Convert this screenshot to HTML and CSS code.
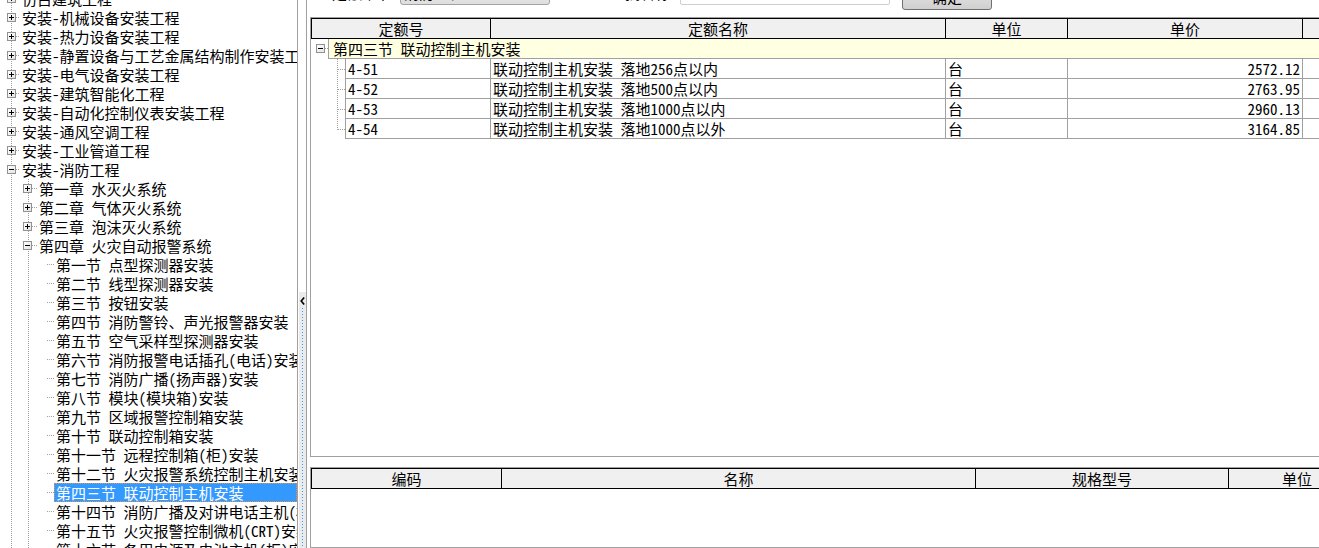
FILE: index.html
```html
<!DOCTYPE html>
<html lang="zh-CN">
<head>
<meta charset="utf-8">
<title>定额查询</title>
<link rel="stylesheet" href="styles.css">
</head>
<body>
<div class="tree-panel">
  <div class="tree">
    <div class="node l0"><span class="box plus"></span><span class="hc"></span><span class="lbl">仿古建筑工程</span></div>
    <div class="node l0"><span class="box plus"></span><span class="hc"></span><span class="lbl">安装-机械设备安装工程</span></div>
    <div class="node l0"><span class="box plus"></span><span class="hc"></span><span class="lbl">安装-热力设备安装工程</span></div>
    <div class="node l0"><span class="box plus"></span><span class="hc"></span><span class="lbl">安装-静置设备与工艺金属结构制作安装工程</span></div>
    <div class="node l0"><span class="box plus"></span><span class="hc"></span><span class="lbl">安装-电气设备安装工程</span></div>
    <div class="node l0"><span class="box plus"></span><span class="hc"></span><span class="lbl">安装-建筑智能化工程</span></div>
    <div class="node l0"><span class="box plus"></span><span class="hc"></span><span class="lbl">安装-自动化控制仪表安装工程</span></div>
    <div class="node l0"><span class="box plus"></span><span class="hc"></span><span class="lbl">安装-通风空调工程</span></div>
    <div class="node l0"><span class="box plus"></span><span class="hc"></span><span class="lbl">安装-工业管道工程</span></div>
    <div class="node l0"><span class="box minus"></span><span class="hc"></span><span class="lbl">安装-消防工程</span></div>
    <div class="kids">
      <div class="node l1"><span class="box plus"></span><span class="hc"></span><span class="lbl">第一章&ensp;水灭火系统</span></div>
      <div class="node l1"><span class="box plus"></span><span class="hc"></span><span class="lbl">第二章&ensp;气体灭火系统</span></div>
      <div class="node l1"><span class="box plus"></span><span class="hc"></span><span class="lbl">第三章&ensp;泡沫灭火系统</span></div>
      <div class="node l1"><span class="box minus"></span><span class="hc"></span><span class="lbl">第四章&ensp;火灾自动报警系统</span></div>
      <div class="node l2"><span class="hc"></span><span class="lbl">第一节&ensp;点型探测器安装</span></div>
      <div class="node l2"><span class="hc"></span><span class="lbl">第二节&ensp;线型探测器安装</span></div>
      <div class="node l2"><span class="hc"></span><span class="lbl">第三节&ensp;按钮安装</span></div>
      <div class="node l2"><span class="hc"></span><span class="lbl">第四节&ensp;消防警铃、声光报警器安装</span></div>
      <div class="node l2"><span class="hc"></span><span class="lbl">第五节&ensp;空气采样型探测器安装</span></div>
      <div class="node l2"><span class="hc"></span><span class="lbl">第六节&ensp;消防报警电话插孔(电话)安装</span></div>
      <div class="node l2"><span class="hc"></span><span class="lbl">第七节&ensp;消防广播(扬声器)安装</span></div>
      <div class="node l2"><span class="hc"></span><span class="lbl">第八节&ensp;模块(模块箱)安装</span></div>
      <div class="node l2"><span class="hc"></span><span class="lbl">第九节&ensp;区域报警控制箱安装</span></div>
      <div class="node l2"><span class="hc"></span><span class="lbl">第十节&ensp;联动控制箱安装</span></div>
      <div class="node l2"><span class="hc"></span><span class="lbl">第十一节&ensp;远程控制箱(柜)安装</span></div>
      <div class="node l2"><span class="hc"></span><span class="lbl">第十二节&ensp;火灾报警系统控制主机安装</span></div>
      <div class="node l2 sel"><span class="hc"></span><span class="lbl">第四三节&ensp;联动控制主机安装</span></div>
      <div class="node l2"><span class="hc"></span><span class="lbl">第十四节&ensp;消防广播及对讲电话主机(柜)安装</span></div>
      <div class="node l2"><span class="hc"></span><span class="lbl">第十五节&ensp;火灾报警控制微机(CRT)安装</span></div>
      <div class="node l2"><span class="hc"></span><span class="lbl">第十六节&ensp;备用电源及电池主机(柜)安装</span></div>
    </div>
  </div>
</div>

<div class="splitter">
  <div class="handle">
    <svg class="arrow" width="5" height="8" viewBox="0 0 5 8"><path d="M4.2 0.5 L1.2 4 L4.2 7.5" fill="none" stroke="#000" stroke-width="1.6"/></svg>
    <div class="dots"></div>
  </div>
</div>

<div class="main">
  <div class="toolbar">
    <div class="tb">
      <span class="tb-label">定额章节</span>
      <span class="combo">消防工程</span>
      <span class="tb-label second">查找名称</span>
      <span class="input"></span>
      <span class="btn">确定</span>
    </div>
  </div>

  <div class="grid upper">
    <div class="head">
      <div class="h w1">定额号</div>
      <div class="h w2">定额名称</div>
      <div class="h w3">单位</div>
      <div class="h w4">单价</div>
      <div class="h w5"></div>
    </div>
    <div class="row grp">
      <div class="ggut"><span class="box minus"></span><span class="ghl"></span></div>
      <div class="gcell">第四三节&ensp;联动控制主机安装</div>
    </div>
    <div class="row">
      <div class="gut"><span class="vl"></span><span class="hl"></span></div>
      <div class="cell c1">4-51</div>
      <div class="cell w2">联动控制主机安装&ensp;落地256点以内</div>
      <div class="cell w3">台</div>
      <div class="cell w4 num">2572.12</div>
      <div class="cell w5"></div>
    </div>
    <div class="row">
      <div class="gut"><span class="vl"></span><span class="hl"></span></div>
      <div class="cell c1">4-52</div>
      <div class="cell w2">联动控制主机安装&ensp;落地500点以内</div>
      <div class="cell w3">台</div>
      <div class="cell w4 num">2763.95</div>
      <div class="cell w5"></div>
    </div>
    <div class="row">
      <div class="gut"><span class="vl"></span><span class="hl"></span></div>
      <div class="cell c1">4-53</div>
      <div class="cell w2">联动控制主机安装&ensp;落地1000点以内</div>
      <div class="cell w3">台</div>
      <div class="cell w4 num">2960.13</div>
      <div class="cell w5"></div>
    </div>
    <div class="row last">
      <div class="gut"><span class="vl"></span><span class="hl"></span></div>
      <div class="cell c1">4-54</div>
      <div class="cell w2">联动控制主机安装&ensp;落地1000点以外</div>
      <div class="cell w3">台</div>
      <div class="cell w4 num">3164.85</div>
      <div class="cell w5"></div>
    </div>
  </div>

  <div class="grid lower">
    <div class="head">
      <div class="h b1">编码</div>
      <div class="h b2">名称</div>
      <div class="h b3">规格型号</div>
      <div class="h b4">单位</div>
    </div>
  </div>
</div>
</body>
</html>
```

FILE: styles.css
```css
* { box-sizing: border-box; }
html, body { margin: 0; padding: 0; }
body {
  display: flex;
  width: 1319px;
  height: 548px;
  overflow: hidden;
  background: #fff;
  color: #000;
  font-family: "Noto Sans Mono CJK SC", "Noto Sans CJK SC", "Noto Sans", sans-serif;
  font-size: 15px;
}

/* ---------- tree ---------- */
.tree-panel {
  width: 298px;
  flex: none;
  border-right: 1px solid #a0a0a0;
  overflow: hidden;
}
.tree {
  margin-top: -11px;
  background-image: linear-gradient(#a0a0a0 50%, transparent 50%);
  background-size: 1px 2px;
  background-repeat: repeat-y;
  background-position: 11px 0;
}
.kids {
  background-image: linear-gradient(#a0a0a0 50%, transparent 50%);
  background-size: 1px 2px;
  background-repeat: repeat-y;
  background-position: 28px 0;
}
.node {
  display: flex;
  align-items: center;
  height: 19px;
  white-space: nowrap;
}
.node.l0 { padding-left: 7px; }
.node.l1 { padding-left: 23px; }
.node.l2 { padding-left: 47px; }
.hc {
  flex: none;
  height: 1px;
  background-image: linear-gradient(to right, #a0a0a0 50%, transparent 50%);
  background-size: 2px 1px;
  background-repeat: repeat-x;
}
.l0 .hc { width: 4px; }
.l1 .hc { width: 5px; }
.l2 .hc { width: 7px; }
.lbl {
  padding: 0 2px;
  line-height: 19px;
  height: 19px;
}
.sel .lbl {
  flex: 1;
  background: #3399ff;
  color: #fff;
  outline: 1px dotted #e0964a;
  outline-offset: -1px;
}

.box {
  position: relative;
  flex: none;
  width: 9px;
  height: 9px;
  border: 1px solid #919191;
  background: linear-gradient(135deg, #ffffff 0%, #e4e4e4 100%);
}
.box::before {
  content: "";
  position: absolute;
  left: 1px;
  top: 3px;
  width: 5px;
  height: 1px;
  background: #000;
}
.box.plus::after {
  content: "";
  position: absolute;
  left: 3px;
  top: 1px;
  width: 1px;
  height: 5px;
  background: #000;
}

/* ---------- splitter ---------- */
.splitter {
  width: 8px;
  flex: none;
  display: flex;
  flex-direction: column;
  padding-top: 292px;
}
.handle {
  flex: 1;
  margin-left: 1px;
  background: #ebebeb;
  display: flex;
  flex-direction: column;
  align-items: center;
  padding-top: 5px;
}
.arrow { display: block; flex: none; }
.dots {
  flex: 1;
  width: 1px;
  margin-top: 3px;
  background-image: linear-gradient(#3399ff 34%, transparent 34%);
  background-size: 1px 3px;
  background-repeat: repeat-y;
}

/* ---------- main ---------- */
.main {
  flex: 1;
  min-width: 0;
  border-left: 1px solid #a0a0a0;
  padding-left: 3px;
  overflow: hidden;
  display: flex;
  flex-direction: column;
}
.toolbar {
  height: 17px;
  flex: none;
  overflow: hidden;
}
.tb {
  display: flex;
  align-items: flex-start;
  margin-top: -20px;
  padding-left: 22px;
  white-space: nowrap;
}
.tb-label {
  flex: none;
  width: 68px;
  margin-top: 3px;
  line-height: 19px;
}
.tb-label.second { margin-left: 60px; width: 70px; }
.combo {
  flex: none;
  width: 150px;
  height: 22px;
  margin-top: 3px;
  padding-left: 3px;
  border: 1px solid #a3a3a3;
  border-radius: 3px;
  background: linear-gradient(#f0f0f0, #dedede);
  line-height: 17px;
}
.input {
  flex: none;
  width: 210px;
  height: 22px;
  margin-top: 3px;
  border: 1px solid #cfcfcf;
  border-radius: 2px;
  background: #fff;
}
.btn {
  flex: none;
  width: 90px;
  height: 26px;
  margin-top: 4px;
  margin-left: 12px;
  border: 1px solid #707070;
  border-radius: 3px;
  background: linear-gradient(#f3f3f3 0%, #ebebeb 50%, #dddddd 50%, #cfcfcf 100%);
  text-align: center;
  line-height: 23px;
}

.grid {
  flex: none;
  width: 1100px;
  border: 1px solid #a0a0a0;
  border-right: none;
}
.grid.upper { height: 440px; }
.grid.lower { flex: 1; margin-top: 10px; }

.head {
  display: flex;
  height: 21px;
  border: 1px solid #000;
  border-right: none;
  background: #f0f0f0;
}
.h {
  flex: none;
  height: 19px;
  border-right: 1px solid #000;
  text-align: center;
  line-height: 19px;
  white-space: nowrap;
}
.h.w1 { width: 179px; }
.w2 { width: 455px; }
.w3 { width: 122px; }
.w4 { width: 235px; }
.w5 { width: 120px; }
.h.b1 { width: 190px; }
.h.b2 { width: 474px; }
.h.b3 { width: 253px; }
.h.b4 { width: 137px; }

.row {
  display: flex;
  height: 20px;
}
.ggut {
  flex: none;
  width: 17px;
  display: flex;
  align-items: flex-start;
  padding: 5px 0 0 5px;
}
.ghl {
  flex: none;
  width: 3px;
  height: 1px;
  margin-top: 4px;
  background-image: linear-gradient(to right, #a0a0a0 50%, transparent 50%);
  background-size: 2px 1px;
}
.gcell {
  flex: 1;
  background: #ffffe1;
  border-left: 1px solid #a0a0a0;
  border-bottom: 1px solid #a0a0a0;
  padding-left: 4px;
  line-height: 19px;
  white-space: nowrap;
}
.gut {
  flex: none;
  width: 34px;
  display: flex;
  align-items: flex-start;
  padding-left: 26px;
}
.vl {
  flex: none;
  width: 1px;
  height: 20px;
  background-image: linear-gradient(#a0a0a0 50%, transparent 50%);
  background-size: 1px 2px;
}
.last .vl { height: 11px; }
.hl {
  flex: none;
  width: 7px;
  height: 1px;
  margin-top: 10px;
  background-image: linear-gradient(to right, #a0a0a0 50%, transparent 50%);
  background-size: 2px 1px;
}
.cell {
  flex: none;
  height: 20px;
  border-right: 1px solid #a0a0a0;
  border-bottom: 1px solid #a0a0a0;
  padding-left: 2px;
  line-height: 19px;
  white-space: nowrap;
}
.cell.c1 { width: 146px; border-left: 1px solid #a0a0a0; }
.cell.num { text-align: right; padding-right: 2px; }
```
